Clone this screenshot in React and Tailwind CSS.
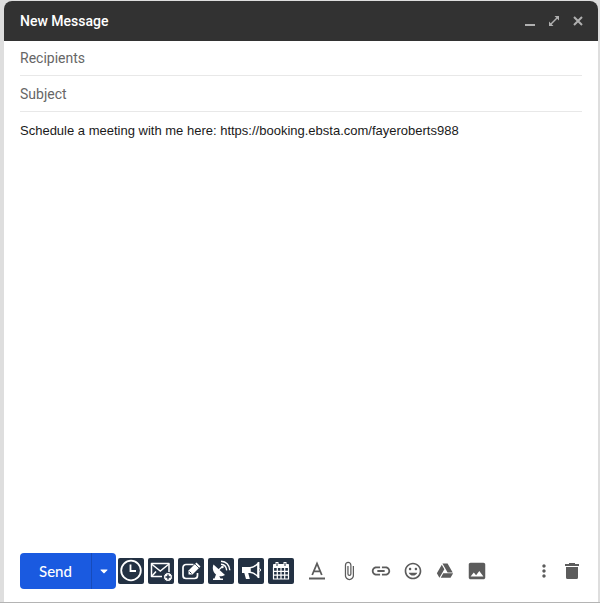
import React, { useState } from 'react';
import { FaCaretDown } from 'react-icons/fa';
import {
  MdAttachFile,
  MdImage,
  MdInsertEmoticon,
  MdLink,
  MdMoreVert,
} from 'react-icons/md';

const ClockIcon = () => (
  <svg viewBox="0 0 26 26" className="w-full h-full" fill="none" stroke="currentColor">
    <circle cx="13" cy="12.5" r="9.8" strokeWidth="1.8" />
    <path d="M12.5 6.5V13H18" strokeWidth="1.8" />
  </svg>
);

const MailPlusIcon = () => (
  <svg viewBox="0 0 26 26" className="w-full h-full" fill="none" stroke="currentColor">
    <path d="M14 18.5H3.5v-13H21V14" strokeWidth="1.5" strokeLinejoin="round" />
    <path d="M3.5 6l8.800 7L21 6M4 18l4-4.500" strokeWidth="1.5" />
    <circle cx="20" cy="19" r="4.500" fill="white" stroke="#233143" />
    <path d="M20 16.500v5M17.500 19h5" stroke="#233143" strokeWidth="1.4" />
  </svg>
);

const ComposeIcon = () => (
  <svg viewBox="0 0 26 26" className="w-full h-full" fill="none" stroke="currentColor">
    <path
      d="M15.500 6.500H8a3 3 0 0 0-3 3v8a3 3 0 0 0 3 3h8.500a3 3 0 0 0 3-3V15"
      strokeWidth="1.7"
    />
    <path d="M10.500 12.500l8-8 4 4-8 8h-4z" fill="currentColor" stroke="none" />
    <path d="M17 6l4 4" stroke="#233143" strokeWidth="0.8" />
    <path d="M11.500 13.500l2 2" stroke="#233143" strokeWidth="1" />
  </svg>
);

const DishIcon = () => (
  <svg viewBox="0 0 26 26" className="w-full h-full" fill="none" stroke="currentColor">
    <path
      d="M5.500 6.500L17 17c-2 1.200-4 1.500-5.700 1.200l1.200 2.300H15V22H5v-1.500h1.500l1.500-4C5 14 4 10 5.500 6.500z"
      fill="currentColor"
      stroke="none"
    />
    <path d="M10.500 12l4-3.500" strokeWidth="1.3" />
    <path d="M13 6.300c3.500.2 5.300 2.500 5.700 6M13 3.300c5.200.3 8.300 3.700 8.800 9" strokeWidth="1.4" />
    <circle cx="14.500" cy="9" r="1.200" fill="currentColor" stroke="none" />
  </svg>
);

const MegaphoneIcon = () => (
  <svg viewBox="0 0 26 26" className="w-full h-full" fill="none" stroke="currentColor">
    <path d="M4 9h8v6H4z" fill="currentColor" stroke="none" />
    <path d="M6 14h4l1.800 7H8z" fill="currentColor" stroke="none" />
    <path d="M12 9.700c3-.2 5.500-1.700 8-4.200v13c-2.500-2.500-5-4-8-4.200z" strokeWidth="1.5" />
    <path d="M20.500 4v16" strokeWidth="1.800" />
    <path d="M21.500 10.500c1.500.5 1.500 2.500 0 3" strokeWidth="1" />
  </svg>
);

const CalendarIcon = () => (
  <svg viewBox="0 0 26 26" className="w-full h-full" fill="none" stroke="currentColor">
    <path d="M5.500 6.500h15v3h-15z" fill="currentColor" />
    <path
      d="M5.500 9v12h15V9M5.500 13.300h15M5.500 17.200h15M9.300 10v11M13 10v11M16.700 10v11"
      strokeWidth="1.2"
    />
    <path d="M9 4v4M17 4v4" strokeWidth="3" />
    <path d="M9 5v3M17 5v3" stroke="#233143" strokeWidth="1" />
  </svg>
);

const TextFormatIcon = () => (
  <svg viewBox="0 0 20 20" className="w-5 h-5" fill="none" stroke="currentColor">
    <path d="M5.200 14L10 2.500 14.800 14M6.800 10.300h6.400" strokeWidth="1.8" />
    <path d="M2 17.500h16" strokeWidth="2" />
  </svg>
);

const DriveIcon = () => (
  <svg viewBox="0 0 24 24" className="w-[18px] h-[18px]" fill="currentColor">
    <path d="M7.710 3.500L1.150 15l3.430 6 6.550-11.500L7.710 3.500zM9.730 15L6.300 21h13.120l3.430-6H9.730zM22.280 14L15.420 2H8.580l6.860 12h6.840z" />
  </svg>
);

const TrashIcon = () => (
  <svg viewBox="0 0 20 20" className="w-5 h-5" fill="currentColor">
    <path d="M7 2h6v1h4v2H3V3h4zM4 6h12v10.500a1.500 1.500 0 0 1-1.500 1.500h-9A1.500 1.500 0 0 1 4 16.500z" />
  </svg>
);

const ExpandIcon = () => (
  <svg viewBox="0 0 12 12" className="w-3 h-3" fill="none" stroke="currentColor">
    <path d="M6.500 1H11v4.500zM1 6.500V11h4.500z" fill="currentColor" stroke="none" />
    <path d="M3 9l6-6" strokeWidth="1.4" />
  </svg>
);

const CloseIcon = () => (
  <svg viewBox="0 0 12 12" className="w-3 h-3" fill="none" stroke="currentColor">
    <path d="M2 2l8 8M10 2l-8 8" strokeWidth="2" />
  </svg>
);

const extensionTools = [
  { label: 'Send later', Icon: ClockIcon },
  { label: 'Add email', Icon: MailPlusIcon },
  { label: 'Templates', Icon: ComposeIcon },
  { label: 'Tracking', Icon: DishIcon },
  { label: 'Campaigns', Icon: MegaphoneIcon },
  { label: 'Schedule', Icon: CalendarIcon },
];

const composeTools = [
  { label: 'Formatting options', Icon: TextFormatIcon },
  { label: 'Attach files', Icon: () => <MdAttachFile className="w-5 h-5" /> },
  { label: 'Insert link', Icon: () => <MdLink className="w-[22px] h-[22px] shrink-0" /> },
  { label: 'Insert emoji', Icon: () => <MdInsertEmoticon className="w-5 h-5" /> },
  { label: 'Insert from Drive', Icon: DriveIcon },
  { label: 'Insert photo', Icon: () => <MdImage className="w-[22px] h-[22px] shrink-0" /> },
];

export default function App() {
  const [message, setMessage] = useState(
    'Schedule a meeting with me here: https://booking.ebsta.com/fayeroberts988'
  );

  return (
    <div className="min-h-screen flex flex-col bg-white font-[Roboto,sans-serif]">
      <div className="flex-1 flex flex-col pl-1 pr-[2px] pt-px bg-[#dedede] border-b border-[#b4b4b4]">
        <main className="flex-1 flex flex-col bg-white rounded-t-lg overflow-hidden">
          <header className="h-10 pl-4 pr-[14px] flex items-center justify-between bg-[#323232] text-white">
            <h1 className="text-sm font-medium">New Message</h1>
            <div className="flex items-center gap-3 text-[#b0b0b0]">
              <button aria-label="Minimize" className="w-3 h-3 flex items-end justify-center pb-px">
                <span className="w-[10px] h-[2px] bg-current" />
              </button>
              <button aria-label="Full screen" className="w-3 h-3">
                <ExpandIcon />
              </button>
              <button aria-label="Close" className="w-3 h-3">
                <CloseIcon />
              </button>
            </div>
          </header>

          <form className="flex-1 flex flex-col px-4" onSubmit={(e) => e.preventDefault()}>
            <input
              aria-label="Recipients"
              placeholder="Recipients"
              className="h-[35px] border-b border-[#e8e8e8] text-sm placeholder:text-[#666] outline-none"
            />
            <input
              aria-label="Subject"
              placeholder="Subject"
              className="h-9 border-b border-[#e8e8e8] text-sm placeholder:text-[#666] outline-none"
            />
            <textarea
              aria-label="Message body"
              value={message}
              onChange={(e) => setMessage(e.target.value)}
              className="flex-1 pt-[9px] resize-none outline-none text-[13px] leading-5 text-[#1a1a1a] font-['Liberation_Sans',Arial,sans-serif]"
            />

            <div className="flex items-center pb-[13px]">
              <div className="flex h-9 rounded bg-[#1a5ae0] text-white overflow-hidden">
                <button type="submit" className="w-[71px] text-[15px] font-medium font-[Lato,sans-serif]">
                  Send
                </button>
                <button
                  type="button"
                  aria-label="More send options"
                  className="w-[25px] flex items-center justify-center border-l border-[#164bbb]"
                >
                  <FaCaretDown className="w-3 h-3" />
                </button>
              </div>

              <div className="flex gap-1 ml-[2px]">
                {extensionTools.map(({ label, Icon }) => (
                  <button
                    key={label}
                    type="button"
                    aria-label={label}
                    className="w-[26px] h-[26px] flex items-center justify-center rounded-xs bg-[#233143] text-white"
                  >
                    <Icon />
                  </button>
                ))}
              </div>

              <div className="flex gap-3 ml-[13px] text-[#5c5c5c]">
                {composeTools.map(({ label, Icon }) => (
                  <button
                    key={label}
                    type="button"
                    aria-label={label}
                    className="w-5 h-5 flex items-center justify-center"
                  >
                    <Icon />
                  </button>
                ))}
              </div>

              <div className="flex gap-2 ml-auto text-[#5c5c5c]">
                <button type="button" aria-label="More options">
                  <MdMoreVert className="w-5 h-5" />
                </button>
                <button type="button" aria-label="Discard draft">
                  <TrashIcon />
                </button>
              </div>
            </div>
          </form>
        </main>
      </div>
      <div className="h-1" />
    </div>
  );
}
